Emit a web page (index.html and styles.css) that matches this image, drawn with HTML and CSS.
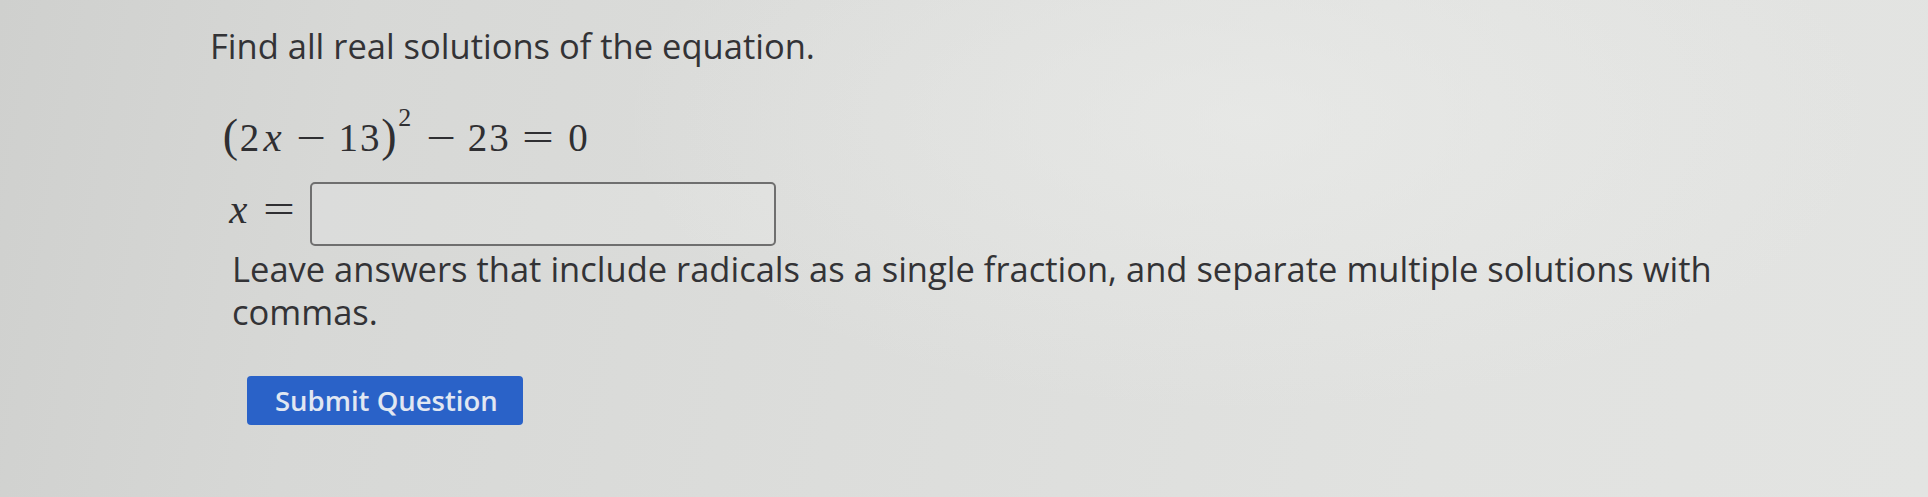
FILE: index.html
```html
<!DOCTYPE html>
<html lang="en">
<head>
<meta charset="utf-8">
<title>Find all real solutions</title>
<link rel="stylesheet" href="styles.css">
</head>
<body>
<div class="page">
  <p class="prompt">Find all real solutions of the equation.</p>
  <div class="math eqn">
    <span class="a pa">(</span><span class="a dg">2</span><span class="a vr">x</span><span class="a bin"><span class="g minus">−</span></span><span class="a dg">1</span><span class="a dg">3</span><span class="a pa">)</span><span class="a sup">2</span><span class="a bin"><span class="g minus">−</span></span><span class="a dg">2</span><span class="a dg">3</span><span class="a rel"><span class="g equals">=</span></span><span class="a dg">0</span>
  </div>
  <div class="answer">
    <span class="math lbl"><span class="a vr">x</span><span class="a rel"><span class="g equals">=</span></span></span>
    <input class="box" type="text" aria-label="x">
  </div>
  <p class="note">Leave answers that include radicals as a single fraction, and separate multiple solutions with commas.</p>
  <button class="submit" type="button">Submit Question</button>
</div>
</body>
</html>
```

FILE: styles.css
```css
html, body {
  margin: 0;
  padding: 0;
}

body {
  width: 1928px;
  height: 497px;
  overflow: hidden;
  background:
    radial-gradient(ellipse 900px 420px at 1250px 120px, rgba(236, 237, 235, 0.6), rgba(236, 237, 235, 0) 70%),
    linear-gradient(100deg, #cfd0ce 0%, #d7d8d6 18%, #dcdddb 45%, #e1e2e0 75%, #e3e4e2 100%);
  color: #333336;
  font-family: "Open Sans", "Liberation Sans", sans-serif;
}

.page {
  padding-top: 23px;
  display: flex;
  flex-direction: column;
  align-items: flex-start;
}

.prompt {
  margin: 0 0 0 210px;
  font-size: 34.5px;
  line-height: 45px;
}

/* math typesetting */
.math {
  font-family: "Liberation Serif", "Times New Roman", serif;
  font-size: 39px;
  line-height: 50px;
  height: 50px;
  color: #2f2f32;
  white-space: nowrap;
}

.eqn {
  margin: 44px 0 0 222px;
}

.a {
  display: inline-block;
  text-align: center;
}

.dg { width: 21.5px; }

.pa {
  width: 16.7px;
  font-size: 46px;
  line-height: 0;
}

.vr {
  width: 24.6px;
  font-style: italic;
  font-size: 41px;
}

.bin { width: 52.7px; }

.rel { width: 57.3px; }

.sup {
  width: 17px;
  font-size: 26px;
  line-height: 0;
  vertical-align: 25px;
  text-align: left;
  padding-left: 1px;
  box-sizing: border-box;
}

.g {
  display: inline-block;
}

.minus { transform: scaleX(1.35); }

.equals { transform: scaleX(1.45); }

/* answer row */
.answer {
  margin: 20px 0 0 226px;
  display: flex;
  align-items: flex-start;
}

.lbl {
  margin-top: 2px;
}

.box {
  margin: 0 0 0 2px;
  width: 466px;
  height: 64px;
  box-sizing: border-box;
  border: 2px solid #6f6f6f;
  border-radius: 5px;
  background: rgba(255, 255, 255, 0.12);
  padding: 0 10px;
  font: inherit;
}

.note {
  margin: 1px 0 0 232px;
  width: 1560px;
  font-size: 34.5px;
  line-height: 43px;
}

.submit {
  margin: 43px 0 0 247px;
  height: 49px;
  padding: 0 25px 0 28px;
  border: none;
  border-radius: 4px;
  background: #2a62c8;
  color: #e1e7f2;
  font-family: "Open Sans", "Liberation Sans", sans-serif;
  font-weight: 600;
  font-size: 27.5px;
  line-height: 49px;
}
```
